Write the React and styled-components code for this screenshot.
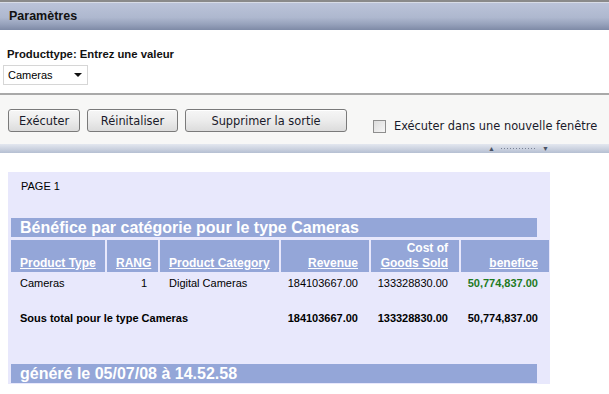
import React from "react";
import styled, { createGlobalStyle } from "styled-components";

const Global = createGlobalStyle`
  html, body { margin: 0; padding: 0; background: #fff; }
  body { font-family: "Liberation Sans", Arial, sans-serif; width: 609px; height: 394px; overflow: hidden; }
`;

const Page = styled.div`
  display: flex;
  flex-direction: column;
  width: 609px;
`;

const Header = styled.div`
  height: 28px;
  border-top: 2px solid #8a8a8a;
  box-shadow: inset 0 1px 0 #d8dce6;
  background: linear-gradient(#bcc4d9 0%, #aeb8cf 55%, #96a1bb 80%, #7e8aa6 100%);
  display: flex;
  align-items: center;
  padding-left: 9px;
  font-weight: bold;
  font-size: 12.5px;
  color: #111;
`;

const Params = styled.div`
  height: 65px;
  padding: 18px 0 0 3px;
  box-sizing: border-box;
  display: flex;
  flex-direction: column;
  align-items: flex-start;
  gap: 5px;
  border-bottom: 2px solid #a9a9a9;
`;

const Label = styled.div`
  font-weight: bold;
  font-size: 11.3px;
  color: #111;
  padding-left: 4px;
`;

const Select = styled.div`
  width: 85px;
  height: 20px;
  box-sizing: border-box;
  border: 1px solid #d6d6d6;
  background: #fff;
  display: flex;
  align-items: center;
  justify-content: space-between;
  padding: 0 5px 0 4px;
  font-size: 11px;
  color: #000;
`;

const Arrow = styled.span`
  width: 0;
  height: 0;
  border-left: 4px solid transparent;
  border-right: 4px solid transparent;
  border-top: 4px solid #111;
`;

const Toolbar = styled.div`
  height: 49px;
  box-sizing: border-box;
  background: #f7f7f6;
  display: flex;
  align-items: flex-start;
  padding: 14px 0 0 8px;
  gap: 7px;
`;

const Button = styled.div`
  width: ${(p) => p.$w}px;
  height: 23px;
  box-sizing: border-box;
  border: 1px solid #7a7a7a;
  border-radius: 3px;
  background: linear-gradient(#f6f6f6 0%, #ececec 50%, #dcdcdc 100%);
  box-shadow: inset 0 1px 0 #fff;
  display: flex;
  align-items: center;
  justify-content: center;
  font-family: "DejaVu Sans", Verdana, sans-serif;
  font-size: 11.4px;
  color: #1a1a2a;
`;

const CheckGroup = styled.label`
  display: flex;
  align-items: center;
  gap: 8px;
  margin: 10px 0 0 19px;
  font-family: "DejaVu Sans", Verdana, sans-serif;
  font-size: 11.4px;
  color: #1a1a2a;
`;

const Box = styled.span`
  width: 13px;
  height: 13px;
  box-sizing: border-box;
  border: 1px solid #8e8e8e;
  background: linear-gradient(135deg, #dcdcdc, #f6f6f6);
`;

const Splitter = styled.div`
  height: 9px;
  background: linear-gradient(#e3e7ef, #c9d0de 60%, #b5bfd2);
  display: flex;
  align-items: center;
  padding-left: 488px;
  gap: 5px;
  font-size: 7px;
  color: #4a5263;
  line-height: 1;
`;

const Dots = styled.span`
  width: 37px;
  height: 3px;
  background-image: radial-gradient(#7a8396 40%, transparent 45%);
  background-size: 3px 3px;
`;

const Content = styled.div`
  padding: 19px 0 0 8px;
`;

const Report = styled.div`
  width: 542px;
  height: 212px;
  box-sizing: border-box;
  background: #e8e8fc;
  padding: 8px 0 0 3px;
  display: flex;
  flex-direction: column;
`;

const PageLabel = styled.div`
  font-size: 11px;
  color: #000;
  padding-left: 10px;
  height: 13px;
  line-height: 13px;
`;

const Bar = styled.div`
  width: 526px;
  height: 19px;
  background: #94a6d8;
  color: #fff;
  font-weight: bold;
  font-size: 16px;
  line-height: 19px;
  padding-left: 9px;
  box-sizing: border-box;
  margin-top: ${(p) => p.$mt}px;
  white-space: nowrap;
`;

const Grid = styled.div`
  display: grid;
  grid-template-columns: 94px 51px 119px 88px 88px 88px;
  column-gap: 2px;
  margin-top: 3px;
`;

const Th = styled.div`
  background: #94a6d8;
  height: 32px;
  box-sizing: border-box;
  display: flex;
  flex-direction: column;
  justify-content: flex-end;
  align-items: ${(p) => (p.$right ? "flex-end" : "flex-start")};
  text-align: ${(p) => (p.$right ? "right" : "left")};
  padding: 0 ${(p) => (p.$right ? 11 : 0)}px 1px ${(p) => (p.$right ? 0 : 9)}px;
  color: #fff;
  font-weight: bold;
  font-size: 12px;
  line-height: 15px;
`;

const U = styled.span`
  text-decoration: underline;
`;

const Td = styled.div`
  height: ${(p) => p.$h}px;
  display: flex;
  align-items: center;
  justify-content: ${(p) => (p.$right ? "flex-end" : "flex-start")};
  padding: 0 ${(p) => (p.$right ? 11 : 0)}px 0 ${(p) => (p.$right ? 0 : 9)}px;
  font-size: 11px;
  font-weight: ${(p) => (p.$bold ? "bold" : "normal")};
  color: ${(p) => p.$color || "#000"};
  grid-column: ${(p) => (p.$span ? `span ${p.$span}` : "auto")};
  white-space: nowrap;
`;

export default function App() {
  return (
    <Page>
      <Global />
      <Header>Paramètres</Header>
      <Params>
        <Label>Producttype: Entrez une valeur</Label>
        <Select>
          Cameras
          <Arrow />
        </Select>
      </Params>
      <Toolbar>
        <Button $w={72}>Exécuter</Button>
        <Button $w={91}>Réinitaliser</Button>
        <Button $w={162}>Supprimer la sortie</Button>
        <CheckGroup>
          <Box />
          Exécuter dans une nouvelle fenêtre
        </CheckGroup>
      </Toolbar>
      <Splitter>
        <span>▲</span>
        <Dots />
        <span>▼</span>
      </Splitter>
      <Content>
        <Report>
          <PageLabel>PAGE 1</PageLabel>
          <Bar $mt={25}>Bénéfice par catégorie pour le type Cameras</Bar>
          <Grid>
            <Th><U>Product Type</U></Th>
            <Th><U>RANG</U></Th>
            <Th><U>Product Category</U></Th>
            <Th $right><U>Revenue</U></Th>
            <Th $right>Cost of<br /><U>Goods Sold</U></Th>
            <Th $right><U>benefice</U></Th>
            <Td $h={22}>Cameras</Td>
            <Td $h={22} $right>1</Td>
            <Td $h={22}>Digital Cameras</Td>
            <Td $h={22} $right>184103667.00</Td>
            <Td $h={22} $right>133328830.00</Td>
            <Td $h={22} $right $bold $color="#1e7a1e">50,774,837.00</Td>
            <Td $h={48} $span={3} $bold>Sous total pour le type Cameras</Td>
            <Td $h={48} $right $bold>184103667.00</Td>
            <Td $h={48} $right $bold>133328830.00</Td>
            <Td $h={48} $right $bold>50,774,837.00</Td>
          </Grid>
          <Bar $mt={22}>généré le 05/07/08 à 14.52.58</Bar>
        </Report>
      </Content>
    </Page>
  );
}
